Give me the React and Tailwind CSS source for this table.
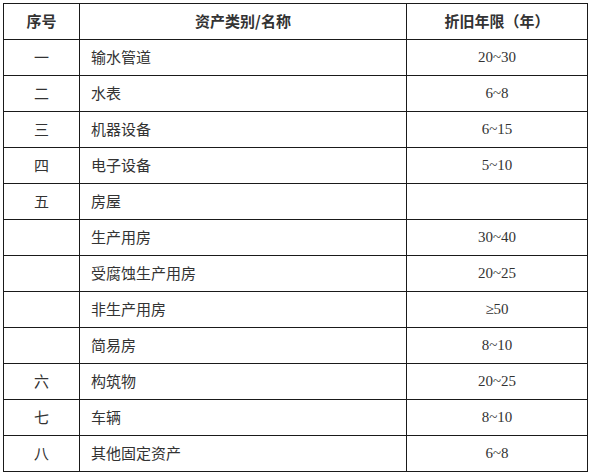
import React from "react";

const rows = [
  ["一", "输水管道", "20~30"],
  ["二", "水表", "6~8"],
  ["三", "机器设备", "6~15"],
  ["四", "电子设备", "5~10"],
  ["五", "房屋", ""],
  ["", "生产用房", "30~40"],
  ["", "受腐蚀生产用房", "20~25"],
  ["", "非生产用房", "≥50"],
  ["", "简易房", "8~10"],
  ["六", "构筑物", "20~25"],
  ["七", "车辆", "8~10"],
  ["八", "其他固定资产", "6~8"],
];

const cjk = "font-['Noto_Sans_CJK_SC',sans-serif]";
const num = "font-['Liberation_Serif','Noto_Sans_CJK_SC',serif]";

export default function App() {
  return (
    <div className="bg-white pl-[3px] pt-[3px] w-[591px] h-[476px]">
      <table className={`border-collapse table-fixed w-[584px] text-[#333] ${cjk}`}>
        <colgroup>
          <col className="w-[76px]" />
          <col className="w-[327px]" />
          <col className="w-[181px]" />
        </colgroup>
        <thead>
          <tr className="h-[36px]">
            <th className="border border-[#1a1a1a] text-[15px] font-bold p-0">序号</th>
            <th className="border border-[#1a1a1a] text-[15px] font-bold p-0">资产类别/名称</th>
            <th className="border border-[#1a1a1a] text-[15px] font-bold p-0">折旧年限（年）</th>
          </tr>
        </thead>
        <tbody>
          {rows.map(([no, name, years], i) => (
            <tr key={i} className="h-[36px]">
              <td className="border border-[#1a1a1a] text-center text-[15px] p-0">{no}</td>
              <td className="border border-[#1a1a1a] text-[15px] pl-[11px] py-0">{name}</td>
              <td className={`border border-[#1a1a1a] text-center text-[15px] p-0 ${num}`}>{years}</td>
            </tr>
          ))}
        </tbody>
      </table>
    </div>
  );
}
